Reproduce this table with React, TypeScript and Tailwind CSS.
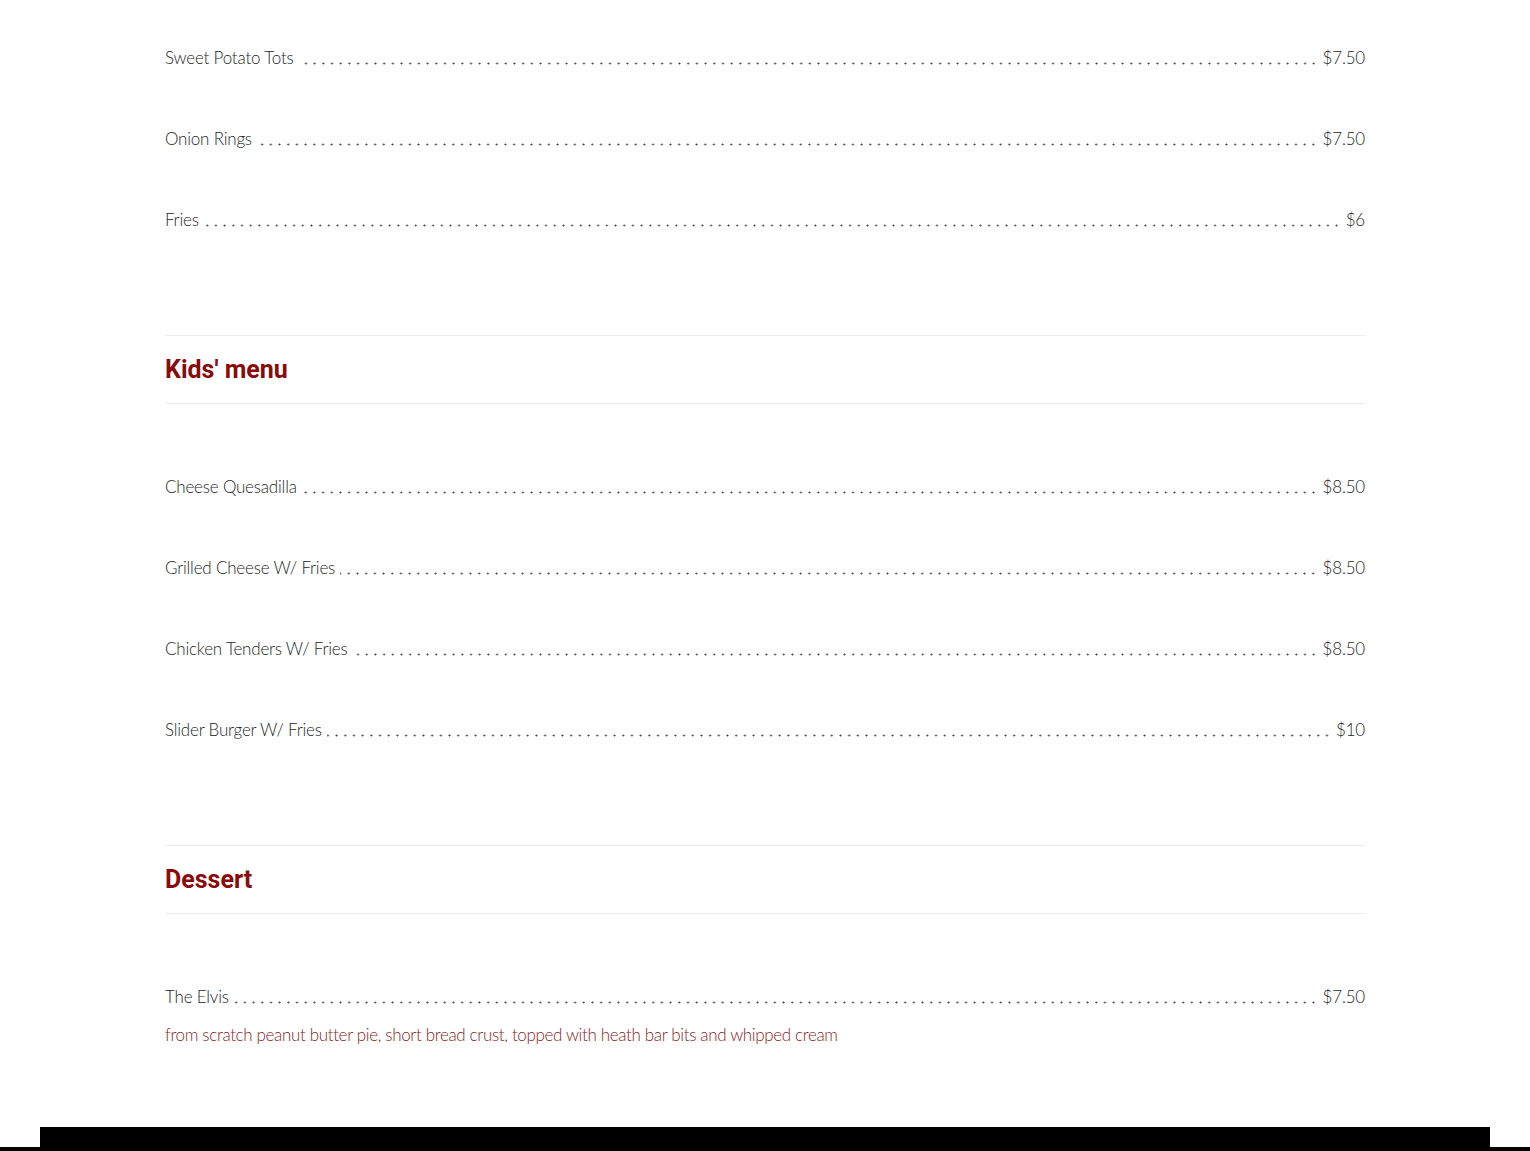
const SIDES = [
  { name: "Sweet Potato Tots", price: "$7.50" },
  { name: "Onion Rings", price: "$7.50" },
  { name: "Fries", price: "$6" },
];

const KIDS = [
  { name: "Cheese Quesadilla", price: "$8.50" },
  { name: "Grilled Cheese W/ Fries", price: "$8.50" },
  { name: "Chicken Tenders W/ Fries", price: "$8.50" },
  { name: "Slider Burger W/ Fries", price: "$10" },
];

function Item({ name, price, desc }: { name: string; price: string; desc?: string }) {
  return (
    <div className="flex flex-col">
      <div className="flex items-end text-[17px] leading-[27px] tracking-[-0.2px] text-[#262626] font-light">
        <span className="whitespace-nowrap">{name}</span>
        {/* dotted leader */}
        <div className="mx-[5px] mb-[6px] h-[3px] flex-1 bg-[radial-gradient(circle,#444_0.8px,transparent_1.2px)] bg-[length:8.7px_3px] bg-[position:right_bottom] bg-repeat-x" />
        <span className="whitespace-nowrap">{price}</span>
      </div>
      {desc && (
        <p className="mt-[12px] text-[17px] leading-[26px] tracking-[-0.35px] font-light text-[#8a2222]">
          {desc}
        </p>
      )}
    </div>
  );
}

function Heading({ title }: { title: string }) {
  return (
    <div className="border-y border-[#ececec] pt-[17px] pb-[16px]">
      <h2 className="font-['Roboto',sans-serif] text-[25px] leading-[34px] font-bold text-[#8a0b0b]">
        {title}
      </h2>
    </div>
  );
}

export default function App() {
  return (
    <div className="min-h-[1151px] bg-white font-['Lato',sans-serif] flex flex-col">
      <main className="mx-auto w-[1200px] pt-[44px] flex-1">
        <div className="flex flex-col gap-[54px]">
          {SIDES.map((i) => (
            <Item key={i.name} {...i} />
          ))}
        </div>

        <div className="mt-[102px]">
          <Heading title="Kids' menu" />
        </div>
        <div className="mt-[69px] flex flex-col gap-[54px]">
          {KIDS.map((i) => (
            <Item key={i.name} {...i} />
          ))}
        </div>

        <div className="mt-[102px]">
          <Heading title="Dessert" />
        </div>
        <div className="mt-[69px]">
          <Item
            name="The Elvis"
            price="$7.50"
            desc="from scratch peanut butter pie, short bread crust, topped with heath bar bits and whipped cream"
          />
        </div>
      </main>
      <footer className="flex flex-col">
        <div className="mx-[40px] h-[20px] bg-black" />
        <div className="h-[4px] bg-black" />
      </footer>
    </div>
  );
}
